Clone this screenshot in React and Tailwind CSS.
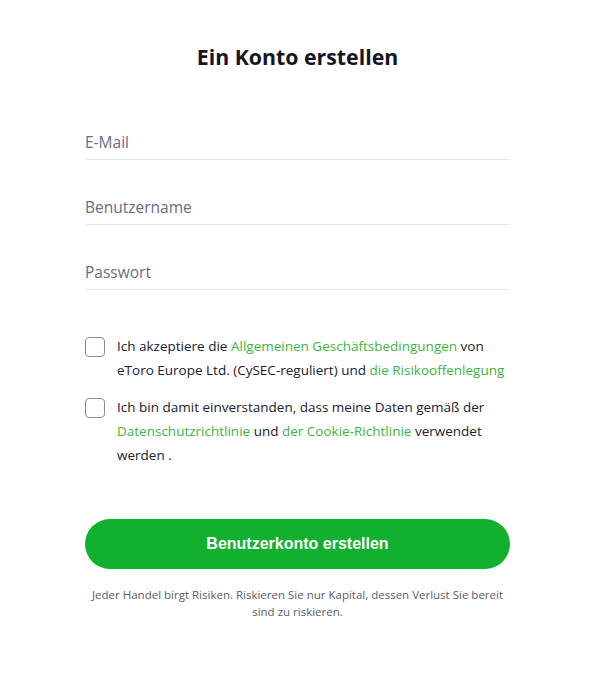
import React, { useState } from 'react';

const Field = ({ placeholder, type = 'text' }) => (
  <div className="border-b border-[#e5e6ec] pt-[33px] pb-[3px]">
    <input
      type={type}
      placeholder={placeholder}
      className="w-full h-[28px] bg-transparent text-[15.5px] text-[#2c2c3a] placeholder:text-[#6b6b7d] outline-none"
    />
  </div>
);

const Check = ({ checked, onChange, children }) => (
  <label className="flex items-start gap-[12px] cursor-pointer">
    <span
      onClick={onChange}
      className={`mt-[3px] shrink-0 w-[20px] h-[20px] rounded-[4px] border ${
        checked ? 'border-[#13b12f] bg-[#13b12f]' : 'border-[#8a8d9a] bg-white'
      }`}
    />
    <span className="text-[13.5px] leading-[24px] text-[#202030]">{children}</span>
  </label>
);

export default function App() {
  const [terms, setTerms] = useState(false);
  const [privacy, setPrivacy] = useState(false);

  return (
    <div
      className="min-h-[678px] bg-white"
      style={{ fontFamily: '"Open Sans", "Noto Sans", sans-serif' }}
    >
      <div className="w-[425px] ml-[85px] pt-[43px]">
        <h1 className="text-center text-[21.3px] leading-[28px] font-bold text-[#15151f]">
          Ein Konto erstellen
        </h1>

        <div className="mt-[24px]">
          <Field placeholder="E-Mail" type="email" />
          <Field placeholder="Benutzername" />
          <Field placeholder="Passwort" type="password" />
        </div>

        <div className="mt-[44px] flex flex-col gap-[13px]">
          <Check checked={terms} onChange={() => setTerms(!terms)}>
            Ich akzeptiere die{' '}
            <a href="#" className="text-[#3db53f]">Allgemeinen Geschäftsbedingungen</a> von
            eToro Europe Ltd. (CySEC-reguliert) und{' '}
            <a href="#" className="text-[#3db53f]">die Risikooffenlegung</a>
          </Check>
          <Check checked={privacy} onChange={() => setPrivacy(!privacy)}>
            Ich bin damit einverstanden, dass meine Daten gemäß der{' '}
            <a href="#" className="text-[#3db53f]">Datenschutzrichtlinie</a> und{' '}
            <a href="#" className="text-[#3db53f]">der Cookie-Richtlinie</a> verwendet
            werden .
          </Check>
        </div>

        <button
          type="button"
          className="mt-[52px] w-full h-[50px] rounded-full bg-[#11b12f] text-white text-[16px] font-bold"
          style={{ fontFamily: '"Liberation Sans", Arial, sans-serif' }}
        >
          Benutzerkonto erstellen
        </button>

        <p className="mt-[17px] px-[4px] text-center text-[11.5px] leading-[17px] text-[#5b5b6e]">
          Jeder Handel birgt Risiken. Riskieren Sie nur Kapital, dessen Verlust Sie bereit
          sind zu riskieren.
        </p>
      </div>
    </div>
  );
}
